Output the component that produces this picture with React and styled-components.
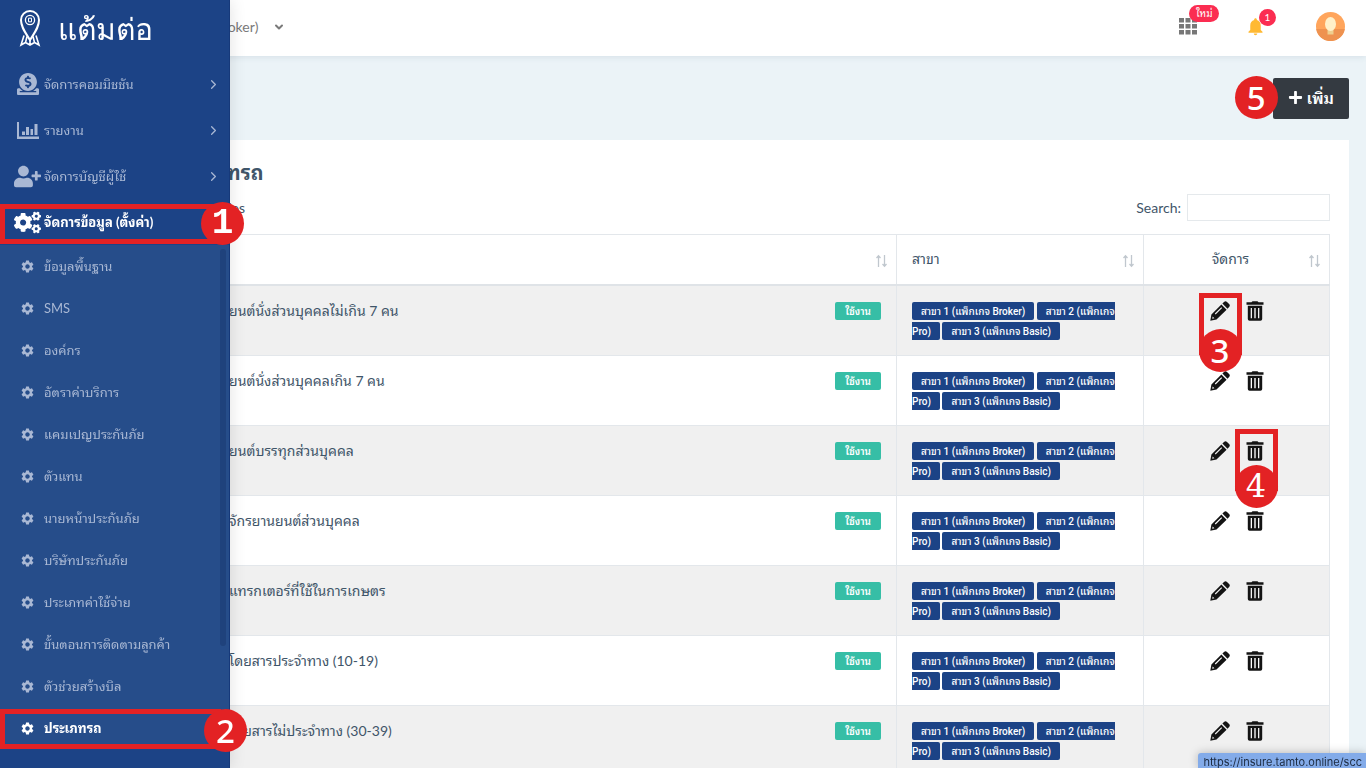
import React from "react";
import styled, { createGlobalStyle, css } from "styled-components";
import { FaDonate, FaUserPlus, FaCogs, FaPlus } from "react-icons/fa";
import { MdSettings, MdNotifications } from "react-icons/md";
import { FiChevronRight, FiChevronDown } from "react-icons/fi";

const thai = `"Noto Sans Thai Looped", Loma, Waree, Garuda, "Noto Sans Thai", "Noto Sans", sans-serif`;

const GlobalStyle = createGlobalStyle`
  *, *::before, *::after { box-sizing: border-box; }
  body { margin: 0; background: #ebf3f7; color: #3f5569; font: 14px/20px Lato, ${thai}; overflow: hidden; }
  button, input, select { font: inherit; color: inherit; }
`;

const Page = styled.div`
  height: 100vh;
  overflow: hidden;
  padding-left: 156px;
`;

const Sidebar = styled.aside`
  position: fixed;
  inset: 0 auto 0 0;
  width: 230px;
  background: #1c4386;
  border-right: 1px solid #16397a;
  box-shadow: 0 0 16px rgba(0, 0, 0, 0.12);
  z-index: 5;
`;

const Brand = styled.a`
  display: flex;
  align-items: center;
  gap: 14px;
  height: 61px;
  padding: 0 0 5px 16px;
  color: #fff;
  font: 30px/40px Lato, "Noto Sans", sans-serif;
  text-decoration: none;
`;

const List = styled.ul`
  list-style: none;
  margin: 0;
  padding: 0;
`;

const MenuItem = styled.li`
  position: relative;
`;

const MenuLink = styled.a`
  display: flex;
  align-items: center;
  height: ${(p) => (p.$sub ? 42 : 46)}px;
  padding: 0 8px 0 ${(p) => (p.$sub ? 20 : 14)}px;
  color: ${(p) => (p.$active ? "#fff" : "#a9b8d4")};
  font-weight: ${(p) => (p.$active ? 700 : 400)};
  font-size: 13px;
  text-decoration: none;
`;

const MenuIcon = styled.span`
  display: flex;
  justify-content: ${(p) => (p.$sub ? "flex-start" : "center")};
  flex: none;
  width: ${(p) => (p.$sub ? 24 : 27)}px;
  margin-right: ${(p) => (p.$sub ? 0 : 3)}px;
`;

const MenuText = styled.span`
  flex: 1;
`;

const SubMenu = styled(List)`
  position: relative;
  background: #264d8a;
  &::after {
    content: "";
    position: absolute;
    top: 4px;
    right: 3px;
    width: 6px;
    height: 397px;
    border-radius: 3px;
    background: #1f427c;
  }
`;

const markColor = "#e32224";

const iconFrame = css`
  left: -11px;
  width: 43px;
  height: 62px;
  border-width: 5px 5px 0;
`;

const Frame = styled.span`
  position: absolute;
  border: 5px solid ${markColor};
  pointer-events: none;
  z-index: 2;
  ${(p) =>
    ({
      menu: css`inset: 5px 8px 1px 0;`,
      sub: css`inset: 2px 8px 0 0;`,
      edit: css`top: -8px; ${iconFrame}`,
      remove: css`top: -12px; ${iconFrame}`,
    })[p.$at]}
`;

const digitFont = {
  plain: `500 33px/43px "Noto Sans", sans-serif`,
  mono: `700 36px/43px "Liberation Mono", monospace`,
  slab: `400 32px/43px "DejaVu Serif", serif`,
};

const Disc = styled.span`
  position: absolute;
  display: flex;
  align-items: center;
  justify-content: center;
  width: 43px;
  height: 43px;
  border-radius: 50%;
  background: ${markColor};
  color: #fff;
  font: ${(p) => digitFont[p.$face || "plain"]};
  pointer-events: none;
  z-index: 3;
  ${(p) =>
    ({
      menu: css`top: 3px; right: -15px;`,
      sub: css`top: 2px; right: -18px;`,
      edit: css`top: 28px; left: -11px;`,
      remove: css`top: 24px; left: -11px;`,
      before: css`top: -2px; left: -38px;`,
    })[p.$at]}
`;

const TopBar = styled.header`
  display: flex;
  align-items: center;
  justify-content: space-between;
  height: 56px;
  margin-left: -156px;
  padding: 0 21px 3px 116px;
  background: #fff;
  box-shadow: 0 1px 6px rgba(60, 90, 120, 0.12);
`;

const BranchSwitch = styled.button`
  display: flex;
  align-items: center;
  gap: 14px;
  padding: 0;
  border: 0;
  background: none;
  color: #7a7a7a;
  white-space: nowrap;
`;

const Tools = styled.div`
  display: flex;
  align-items: center;
`;

const Tool = styled.button`
  position: relative;
  display: flex;
  margin-right: ${(p) => p.$gap || 0}px;
  padding: 0;
  border: 0;
  background: none;
  color: ${(p) => p.$color};
`;

const Count = styled.span`
  position: absolute;
  top: ${(p) => (p.$wide ? -13 : -7)}px;
  left: ${(p) => (p.$wide ? 10 : 14)}px;
  min-width: 17px;
  height: 17px;
  padding: 0 ${(p) => (p.$wide ? 7 : 0)}px;
  border-radius: 9px;
  background: #fb2d51;
  color: #fff;
  font-size: 10px;
  line-height: 17px;
  text-align: center;
  white-space: nowrap;
`;

const Actions = styled.div`
  display: flex;
  justify-content: flex-end;
  padding: 22px 17px 21px;
`;

const AddWrap = styled.div`
  position: relative;
`;

const AddButton = styled.button`
  display: flex;
  align-items: center;
  gap: 4px;
  height: 41px;
  padding: 0 15px 2px;
  border: 0;
  border-radius: 2px;
  background: #343a41;
  color: #fff;
  font-size: 16px;
  font-weight: 600;
`;

const Panel = styled.main`
  margin-right: 17px;
  padding: 20px 19px;
  background: #fff;
`;

const Title = styled.h1`
  margin: 0;
  font-size: 20px;
  line-height: 24px;
`;

const Controls = styled.div`
  display: flex;
  align-items: center;
  justify-content: space-between;
  height: 27px;
  margin: 10px 0 13px;
`;

const SearchLabel = styled.label`
  display: flex;
  align-items: center;
  gap: 6px;
`;

const SearchInput = styled.input`
  width: 143px;
  height: 27px;
  border: 1px solid #e5e9ec;
  background: #fff;
`;

const LengthLabel = styled.label`
  white-space: nowrap;
`;

const LengthSelect = styled.select`
  width: 28px;
  border: 0;
  background: none;
  appearance: none;
`;

const Table = styled.table`
  width: 100%;
  table-layout: fixed;
  border-collapse: collapse;
  border: 1px solid #e3e7eb;
`;

const HeadCell = styled.th`
  position: relative;
  width: ${(p) => p.$width || "auto"};
  height: 50px;
  padding: ${(p) => (p.$align ? "0 27px 0 15px" : "0 15px")};
  border: 1px solid #e3e7eb;
  border-bottom: 2px solid #dfe3e7;
  font-weight: 400;
  text-align: ${(p) => p.$align || "left"};
`;

const SortMark = styled.svg`
  position: absolute;
  right: 8px;
  bottom: 16px;
  width: 13px;
  height: 14px;
`;

const Row = styled.tr`
  background: ${(p) => (p.$odd ? "#f0f0f0" : "#fff")};
`;

const Cell = styled.td`
  padding: 15px 15px 14px;
  border: 1px solid #e3e7eb;
  vertical-align: top;
`;

const NumberCell = styled(Cell)`
  padding: 15px 0 14px;
  text-align: center;
`;

const NumberHead = styled(HeadCell)`
  width: 23px;
  padding: 0;
  text-align: center;
`;

const NameLine = styled.div`
  display: flex;
  align-items: center;
  justify-content: space-between;
`;

const Status = styled.span`
  padding: 0 10px;
  border-radius: 2px;
  background: #36bea6;
  color: #fff;
  font-size: 10px;
  font-weight: 600;
  line-height: 18px;
`;

const Branches = styled.div`
  height: 40px;
  padding-top: 1px;
  font: 500 10px/20px Roboto, ${thai};
  color: #fff;
`;

const Branch = styled.span`
  padding: 4px 9px 3px;
  border-radius: 2px;
  background: #1c4386;
`;

const Icons = styled.div`
  display: flex;
  justify-content: center;
  gap: 16px;
`;

const IconWrap = styled.span`
  position: relative;
  display: flex;
`;

const IconButton = styled.button`
  display: flex;
  padding: 0;
  border: 0;
  background: none;
  color: #141414;
`;

const LinkHint = styled.div`
  position: fixed;
  right: 0;
  bottom: 0;
  height: 15px;
  padding: 0 4px 0 6px;
  border-top-left-radius: 3px;
  background: #83abe9;
  box-shadow: 0 0 10px rgba(0, 0, 0, 0.25);
  color: #1c2a40;
  font: 11px/18px Inter, sans-serif;
  z-index: 6;
`;

const PinLogo = () => (
  <svg width="28" height="38" viewBox="0 0 28 38" fill="none" stroke="#fff" strokeWidth="2">
    <path d="M14 31C9 23 5 18 5 11a9 9 0 0 1 18 0c0 7-4 12-9 20z" />
    <circle cx="14" cy="11" r="4.6" strokeWidth="1.3" />
    <path d="M12.500 9.200h3v3.600h-3z" strokeWidth="1" />
    <path d="M8 26.500 5 36l4.500-2.500L14 36l4.500-2.500L23 36l-3-9.500M9.500 33.500l1.500-6M18.500 33.500l-1.500-6M14 36v-5" strokeWidth="1.600" />
  </svg>
);

const ReportIcon = () => (
  <svg width="22" height="17" viewBox="0 0 22 17" fill="currentColor">
    <path d="M0 0h2v14.500h20V17H0zM5 9.500h3v3.500H5zM9 5h3v8H9zM13.500 7h2.500v6h-2.500zM17.500 2h3v11h-3z" />
  </svg>
);

const GridIcon = () => (
  <svg width="18" height="17" viewBox="0 0 18 17" fill="currentColor">
    <path d="M0 0h5v4.500H0zM6.500 0h5v4.500h-5zM13 0h5v4.500h-5zM0 6h5v4.500H0zM6.500 6h5v4.500h-5zM13 6h5v4.500h-5zM0 12h5v4.500H0zM6.500 12h5v4.500h-5zM13 12h5v4.500h-5z" />
  </svg>
);

const Pencil = () => (
  <svg width="20" height="20" viewBox="0 0 20 20" fill="currentColor">
    <path d="M14 1a2.200 2.200 0 0 1 3 0l2.100 2.100a2.200 2.200 0 0 1 0 3l-1.600 1.600-5.100-5.100z" />
    <path fillRule="evenodd" d="M11.400 3.500 16.600 8.700 6.500 18.600 0.300 19.700 1.400 13.500zM11.300 6.200 4.800 12.600l.8.800 6.500-6.400zM2.700 15.600 2.200 17.800 4.400 17.300z" />
  </svg>
);

const Trash = () => (
  <svg width="18" height="20" viewBox="0 0 18 20" fill="currentColor">
    <path d="M5.500 1.300 6.500.3h5l1 1h5v2.400H.5V1.300z" />
    <path fillRule="evenodd" d="M1.800 4.800h14.400V18a1.800 1.800 0 0 1-1.800 1.800H3.600A1.800 1.800 0 0 1 1.800 18zM4.700 7v10.200h1.300V7zM8.300 7v10.200h1.400V7zM12 7v10.200h1.300V7z" />
  </svg>
);

const Avatar = () => (
  <svg width="29" height="29" viewBox="0 0 29 29">
    <circle cx="14.500" cy="14.500" r="14.500" fill="#ffa55c" />
    <path d="M0.200 17h28.600a14.500 14.500 0 0 1-28.600 0z" fill="#ee9250" />
    <path d="M11.500 17h6v5.500h-6z" fill="#efcf8f" />
    <ellipse cx="14.500" cy="12" rx="5.500" ry="7" fill="#fff0c9" />
  </svg>
);

const Sort = () => (
  <SortMark viewBox="0 0 13 14" fill="none" stroke="#c0c7ce" strokeWidth="1.300">
    <path d="M3.500 13V2M1.500 4 3.500 1.800 5.500 4M9.500 1v11M7.500 10l2 2.200 2-2.200" />
  </SortMark>
);

const menu = [
  { text: "จัดการคอมมิชชัน", icon: <FaDonate size={22} /> },
  { text: "รายงาน", icon: <ReportIcon /> },
  { text: "จัดการบัญชีผู้ใช้", icon: <FaUserPlus size={27} /> },
];

const subMenu = [
  "ข้อมูลพื้นฐาน",
  "SMS",
  "องค์กร",
  "อัตราค่าบริการ",
  "แคมเปญประกันภัย",
  "ตัวแทน",
  "นายหน้าประกันภัย",
  "บริษัทประกันภัย",
  "ประเภทค่าใช้จ่าย",
  "ขั้นตอนการติดตามลูกค้า",
  "ตัวช่วยสร้างบิล",
  "ประเภทรถ",
];

const rows = [
  "รถยนต์นั่งส่วนบุคคลไม่เกิน 7 คน",
  "รถยนต์นั่งส่วนบุคคลเกิน 7 คน",
  "รถยนต์บรรทุกส่วนบุคคล",
  "รถจักรยานยนต์ส่วนบุคคล",
  "รถแทรกเตอร์ที่ใช้ในการเกษตร",
  "รถโดยสารประจำทาง (10-19)",
  "รถโดยสารไม่ประจำทาง (30-39)",
];

export default function App() {
  return (
    <>
      <GlobalStyle />
      <Sidebar>
        <Brand href="#">
          <PinLogo />
          แต้มต่อ
        </Brand>
        <List>
          {menu.map((m) => (
            <MenuItem key={m.text}>
              <MenuLink href="#">
                <MenuIcon>{m.icon}</MenuIcon>
                <MenuText>{m.text}</MenuText>
                <FiChevronRight size={15} strokeWidth={2} />
              </MenuLink>
            </MenuItem>
          ))}
          <MenuItem>
            <MenuLink href="#" $active>
              <MenuIcon>
                <FaCogs size={27} />
              </MenuIcon>
              <MenuText>จัดการข้อมูล (ตั้งค่า)</MenuText>
            </MenuLink>
            <Frame $at="menu" />
            <Disc $at="menu" $face="mono">1</Disc>
          </MenuItem>
        </List>
        <SubMenu>
          {subMenu.map((text, i) => {
            const active = i === subMenu.length - 1;
            return (
              <MenuItem key={text}>
                <MenuLink href="#" $sub $active={active}>
                  <MenuIcon $sub>
                    <MdSettings size={15} />
                  </MenuIcon>
                  <MenuText>{text}</MenuText>
                </MenuLink>
                {active && <Frame $at="sub" />}
                {active && <Disc $at="sub">2</Disc>}
              </MenuItem>
            );
          })}
        </SubMenu>
      </Sidebar>
      <Page>
        <TopBar>
          <BranchSwitch>
            สาขา 1 (แพ็กเกจ Broker)
            <FiChevronDown size={12} strokeWidth={4} />
          </BranchSwitch>
          <Tools>
            <Tool $color="#777" $gap={48} aria-label="แอป">
              <GridIcon />
              <Count $wide>ใหม่</Count>
            </Tool>
            <Tool $color="#ffb932" $gap={50} aria-label="แจ้งเตือน">
              <MdNotifications size={21} />
              <Count>1</Count>
            </Tool>
            <Tool aria-label="บัญชี">
              <Avatar />
            </Tool>
          </Tools>
        </TopBar>
        <Actions>
          <AddWrap>
            <AddButton>
              <FaPlus size={15} />
              เพิ่ม
            </AddButton>
            <Disc $at="before">5</Disc>
          </AddWrap>
        </Actions>
        <Panel>
          <Title>ประเภทรถ</Title>
          <Controls>
            <LengthLabel>
              <LengthSelect defaultValue="10">
                <option>10</option>
              </LengthSelect>
              entries
            </LengthLabel>
            <SearchLabel>
              Search:
              <SearchInput type="search" />
            </SearchLabel>
          </Controls>
          <Table>
            <thead>
              <tr>
                <NumberHead>#</NumberHead>
                <HeadCell>
                  ชื่อ
                  <Sort />
                </HeadCell>
                <HeadCell $width="247px">
                  สาขา
                  <Sort />
                </HeadCell>
                <HeadCell $width="186px" $align="center">
                  จัดการ
                  <Sort />
                </HeadCell>
              </tr>
            </thead>
            <tbody>
              {rows.map((name, i) => (
                <Row key={name} $odd={i % 2 === 0}>
                  <NumberCell>{i + 1}</NumberCell>
                  <Cell>
                    <NameLine>
                      {name}
                      <Status>ใช้งาน</Status>
                    </NameLine>
                  </Cell>
                  <Cell>
                    <Branches>
                      <Branch>สาขา 1 (แพ็กเกจ Broker)</Branch>{" "}
                      <Branch>สาขา 2 (แพ็กเกจ Pro)</Branch>{" "}
                      <Branch>สาขา 3 (แพ็กเกจ Basic)</Branch>
                    </Branches>
                  </Cell>
                  <Cell>
                    <Icons>
                      <IconWrap>
                        <IconButton aria-label="แก้ไข">
                          <Pencil />
                        </IconButton>
                        {i === 0 && <Frame $at="edit" />}
                        {i === 0 && <Disc $at="edit">3</Disc>}
                      </IconWrap>
                      <IconWrap>
                        <IconButton aria-label="ลบ">
                          <Trash />
                        </IconButton>
                        {i === 2 && <Frame $at="remove" />}
                        {i === 2 && <Disc $at="remove" $face="slab">4</Disc>}
                      </IconWrap>
                    </Icons>
                  </Cell>
                </Row>
              ))}
            </tbody>
          </Table>
        </Panel>
        <LinkHint>https://insure.tamto.online/scc</LinkHint>
      </Page>
    </>
  );
}
